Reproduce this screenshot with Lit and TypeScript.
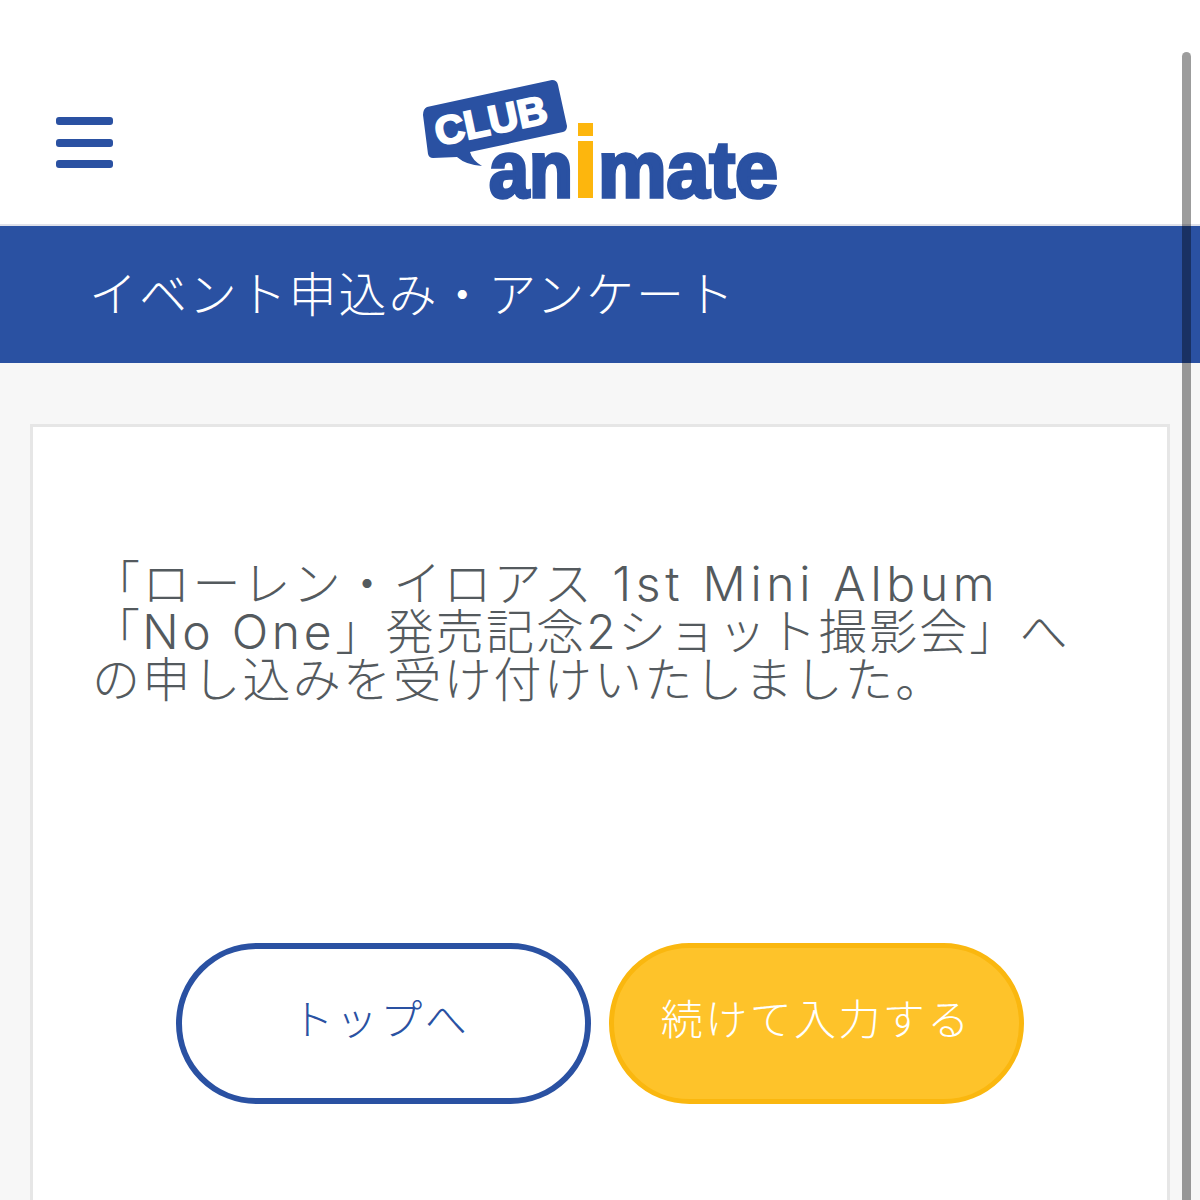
import { LitElement, html, css } from "lit";
import { customElement } from "lit/decorators.js";

@customElement("app-root")
export class AppRoot extends LitElement {
  static styles = css`
    :host { display: block; width: 1200px; height: 1200px; overflow: hidden; position: relative; background: #f7f7f7; font-family: "Noto Sans CJK JP", "Noto Sans", sans-serif; font-weight: 300; }
    .header { height: 224px; background: #fff; border-bottom: 2px solid #dfe1ea; display: flex; align-items: flex-start; padding-left: 56px; }
    .burger { width: 57px; display: flex; flex-direction: column; gap: 13.5px; margin-top: 117px; }
    .burger i { display: block; height: 8px; border-radius: 3px; background: #2a51a2; }
    .logo { width: 360px; height: 130px; margin-left: 307px; margin-top: 70px; display: block; overflow: visible; }
    .band { height: 137px; background: #2a51a2; color: #fff; font-size: 48px; letter-spacing: 1.9px; display: flex; align-items: center; padding: 0 0 8px 89px; box-sizing: border-box; }
    .main { padding: 61px 30px 0; }
    .card { background: #fff; border: 3px solid #e6e6e6; height: 900px; box-sizing: border-box; padding: 133px 59px 0; }
    .msg { font-family: "Inter", "Noto Sans CJK JP", sans-serif; font-size: 48px; line-height: 48px; color: #545a5e; margin: 0; width: 1040px; letter-spacing: 2.2px; }
    .wide { letter-spacing: 4.7px; }
    .mid { letter-spacing: 3.7px; }
    .btns { display: flex; gap: 18.5px; margin: 239px 0 0 84px; }
    .btn { width: 414.5px; height: 161px; box-sizing: border-box; border-radius: 81px; border: 6px solid #2a51a2; background: #fff; color: #2a51a2; font-size: 42px; letter-spacing: 2.4px; display: flex; align-items: center; justify-content: center; padding: 0 6px 14px 0; }
    .btn.go { background: #fec32a; border-color: #fab70f; color: #fff; border-width: 5px; padding-right: 0; }
    .scroll { position: absolute; left: 1182px; top: 52px; width: 9px; height: 1200px; border-radius: 5px; background: rgba(0,0,0,.39); }
    .club { font: 700 40px "Liberation Sans", sans-serif; fill: #fff; stroke: #fff; stroke-width: 2px; }
    .anim { font: 700 80px "Liberation Sans", sans-serif; fill: #2a51a2; stroke: #2a51a2; stroke-width: 3.5px; }
  `;
  render() {
    return html`
      <div class="header">
        <div class="burger"><i></i><i></i><i></i></div>
        <svg class="logo" viewBox="0 0 360 130" aria-label="CLUB animate">
          <path d="M7 37 L132 10 Q137 10 138 15 L147 56 Q147 61 143 62 L50 82 Q52 90 62 96 Q46 95 37 87 L13 88 Q9 88 8 84 L3 45 Q3 39 7 37 Z" fill="#2a51a2"/>
          <text class="club" transform="translate(18 76) rotate(-12)" textLength="114" lengthAdjust="spacingAndGlyphs">CLUB</text>
          <text class="anim" x="69" y="127" textLength="84" lengthAdjust="spacingAndGlyphs">an</text>
          <rect x="158" y="53" width="15" height="13" fill="#fdb60d"/>
          <rect x="158" y="71" width="15" height="57" fill="#fdb60d"/>
          <text class="anim" x="178" y="127" textLength="180" lengthAdjust="spacingAndGlyphs">mate</text>
        </svg>
      </div>
      <div class="band">イベント申込み・アンケート</div>
      <div class="main">
        <div class="card">
          <p class="msg">「ローレン・イロアス<span class="wide"> 1st Mini Album</span><br>「<span class="mid">No One</span>」発売記念2ショット撮影会」へ<br>の申し込みを受け付けいたしました。</p>
          <div class="btns">
            <div class="btn">トップへ</div>
            <div class="btn go">続けて入力する</div>
          </div>
        </div>
      </div>
      <div class="scroll"></div>
    `;
  }
}
